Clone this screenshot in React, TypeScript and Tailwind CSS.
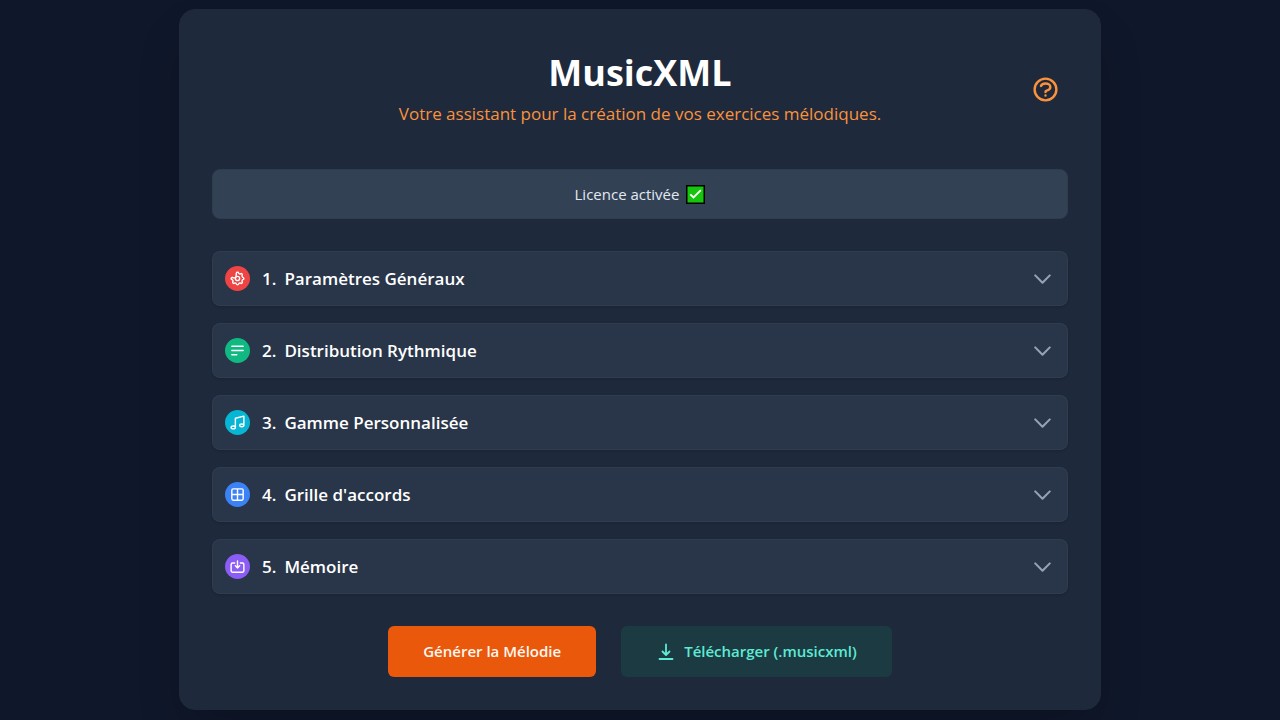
import { useState, type ReactNode } from "react";

type Section = { id: number; title: string; color: string; icon: ReactNode };

const sections: Section[] = [
  {
    id: 1,
    title: "Paramètres Généraux",
    color: "bg-[#ef4444]",
    icon: (
      <>
        <path d="M10.325 4.317c.426-1.756 2.924-1.756 3.350 0a1.724 1.724 0 0 0 2.573 1.066c1.543-.940 3.310.826 2.370 2.370a1.724 1.724 0 0 0 1.065 2.572c1.756.426 1.756 2.924 0 3.350a1.724 1.724 0 0 0-1.066 2.573c.940 1.543-.826 3.310-2.370 2.370a1.724 1.724 0 0 0-2.572 1.065c-.426 1.756-2.924 1.756-3.350 0a1.724 1.724 0 0 0-2.573-1.066c-1.543.940-3.310-.826-2.370-2.370a1.724 1.724 0 0 0-1.065-2.572c-1.756-.426-1.756-2.924 0-3.350 2 1.200 5 1 5.700-.700z" />
        <circle cx="12" cy="12" r="3" />
      </>
    ),
  },
  { id: 2, title: "Distribution Rythmique", color: "bg-[#10b981]", icon: <path d="M4 6h16M4 12h16M4 18h7" /> },
  {
    id: 3,
    title: "Gamme Personnalisée",
    color: "bg-[#06b6d4]",
    icon: (
      <path d="M9 19V6l12-3v13M9 19c0 1.105-1.343 2-3 2s-3-.895-3-2 1.343-2 3-2 3 .895 3 2zm12-3c0 1.105-1.343 2-3 2s-3-.895-3-2 1.343-2 3-2 3 .895 3 2z" />
    ),
  },
  {
    id: 4,
    title: "Grille d'accords",
    color: "bg-[#3b82f6]",
    icon: <path d="M4 12h16M12 4v16M6 4h12a2 2 0 0 1 2 2v12a2 2 0 0 1-2 2H6a2 2 0 0 1-2-2V6a2 2 0 0 1 2-2z" />,
  },
  {
    id: 5,
    title: "Mémoire",
    color: "bg-[#8b5cf6]",
    icon: <path d="M8 7H5a2 2 0 0 0-2 2v9a2 2 0 0 0 2 2h14a2 2 0 0 0 2-2V9a2 2 0 0 0-2-2h-3m-1 4-3 3-3-3m3 3V4" />,
  },
];

function SectionRow({ section }: { section: Section }) {
  const [open, setOpen] = useState(false);
  return (
    <section className="rounded-lg border border-[#334155]/70 bg-[#293548] shadow-sm">
      <button
        type="button"
        aria-expanded={open}
        onClick={() => setOpen(!open)}
        className="flex w-full items-center px-3 py-3.5 text-left"
      >
        <span className={"mr-3 flex size-[25px] shrink-0 items-center justify-center rounded-full text-white " + section.color}>
          <svg viewBox="0 0 24 24" className="size-[17px]" fill="none" stroke="currentColor" strokeWidth="2" strokeLinecap="round" strokeLinejoin="round">
            {section.icon}
          </svg>
        </span>
        <span className="flex flex-1 gap-2 text-[17px] leading-[25px] font-semibold text-white">
          <span>{section.id}.</span>
          <span>{section.title}</span>
        </span>
        <svg viewBox="0 0 24 24" className={open ? "size-[25px] rotate-180 text-[#94a3b8]" : "size-[25px] text-[#94a3b8]"} fill="none" stroke="currentColor" strokeWidth="2" strokeLinecap="round" strokeLinejoin="round">
          <path d="m19 9-7 7-7-7" />
        </svg>
      </button>
    </section>
  );
}

export default function App() {
  return (
    <div className="min-h-screen bg-[#0f172a] px-4 pt-[9px] pb-[11px] font-['Open_Sans','Noto_Sans',sans-serif]">
      <main className="mx-auto max-w-[922px] rounded-2xl border border-[#1e293b] bg-[#1e293b] px-8 pt-10 pb-8 shadow-2xl">
        <header className="flex items-center">
          <div className="w-[45px] shrink-0" />
          <div className="flex-1 text-center">
            <h1 className="text-[36px] leading-[46px] font-bold text-white">MusicXML</h1>
            <p className="mt-1 text-[17px] leading-[28px] text-[#fb923c]">
              Votre assistant pour la création de vos exercices mélodiques.
            </p>
          </div>
          <button type="button" aria-label="Aide" className="flex w-[45px] shrink-0 justify-center text-[#fb923c]">
            <svg viewBox="0 0 24 24" className="size-[29px]" fill="none" stroke="currentColor" strokeWidth="2" strokeLinecap="round" strokeLinejoin="round">
              <path d="M8.228 9c.549-1.165 2.030-2 3.772-2 2.210 0 4 1.343 4 3 0 1.400-1.278 2.575-3.006 2.907-.542.104-.994.540-.994 1.093m0 3h.01M21 12a9 9 0 1 1-18 0 9 9 0 0 1 18 0z" />
            </svg>
          </button>
        </header>

        <div className="mt-[41px] flex items-center justify-center gap-[7px] rounded-lg border border-[#2f3c50] bg-[#334155] py-3 text-[15px] leading-[24px] text-[#e2e8f0]">
          <span>Licence activée</span>
          <svg viewBox="0 0 19 19" className="size-[19px]" role="img" aria-label="activée">
            <path fill="#000" d="M0 0h19v19H0z" />
            <path fill="#16c60c" d="M1.500 1.500h16v16h-16z" />
            <path d="m4.300 9.300 3.200 3.200 7.300-7.300" fill="none" stroke="#fff" strokeWidth="1.800" />
          </svg>
        </div>

        <div className="my-8 flex flex-col gap-[17px]">
          {sections.map((section) => (
            <SectionRow key={section.id} section={section} />
          ))}
        </div>

        <div className="flex flex-wrap justify-center gap-[25px]">
          <button type="button" className="rounded-md bg-[#ea580c] px-[35px] py-[13px] text-[15px] leading-[25px] font-semibold text-[#fff7ed]">
            Générer la Mélodie
          </button>
          <button type="button" className="flex items-center gap-2 rounded-md bg-[#1b3a42] px-[35px] py-[13px] text-[15px] leading-[25px] font-semibold text-[#5eead4]">
            <svg viewBox="0 0 20 20" className="size-5" fill="none" stroke="currentColor" strokeWidth="1.800" strokeLinecap="round" strokeLinejoin="round">
              <path d="M10 2.500v10M6.500 9.500l3.500 3.500 3.500-3.500M3.500 17h13" />
            </svg>
            Télécharger (.musicxml)
          </button>
        </div>
      </main>
    </div>
  );
}
